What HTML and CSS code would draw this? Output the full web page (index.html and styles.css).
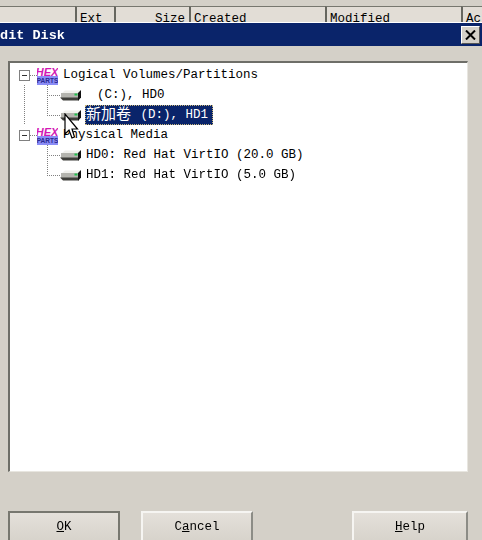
FILE: index.html
```html
<!DOCTYPE html>
<html lang="en">
<head>
    <meta charset="UTF-8">
    <meta name="viewport" content="width=device-width, initial-scale=1.0">
    <title>Edit Disk</title>
    <link rel="stylesheet" href="styles.css">
</head>
<body>

    <svg class="defs" width="0" height="0">
        <symbol id="hex" viewBox="0 0 21 20">
            <rect x="0" y="11" width="21" height="9" fill="#8a8cf6"/>
            <text x="10.5" y="18" text-anchor="middle" class="parts-text">PARTS</text>
            <text x="10" y="10.5" text-anchor="middle" class="hex-text">HEX</text>
        </symbol>
        <symbol id="drive" viewBox="0 0 21 11">
            <path d="M5 0.5H21L18.5 3H2Z" fill="#f0f0ec"/>
            <path d="M1 3H19V8H1Z" fill="#b4b4ae"/>
            <path d="M0 7.5H18.5V10.5H3Z" fill="#3e3e3a"/>
            <path d="M18 3L21 0V7.5L18 11Z" fill="#111"/>
            <rect x="14.5" y="3.5" width="3" height="2" fill="#1fc04c"/>
        </symbol>
    </svg>

    <!-- list view behind the dialog -->
    <div class="list-header">
        <div class="col col-name"></div>
        <div class="col col-ext">Ext</div>
        <div class="col col-size">Size</div>
        <div class="col col-created">Created</div>
        <div class="col col-modified">Modified</div>
        <div class="col col-rest">Ac</div>
    </div>

    <div class="dialog">
        <div class="title-bar">
            <span class="title-text">Edit Disk</span>
            <button class="close-btn" type="button">
                <svg width="11" height="10" viewBox="0 0 11 10"><path d="M1 0.5L10 9.5M10 0.5L1 9.5" stroke="#000" stroke-width="2"/></svg>
            </button>
        </div>

        <div class="tree">
            <div class="row">
                <span class="expander"></span>
                <span class="dash"></span>
                <svg class="icon-hex"><use href="#hex"/></svg>
                <span class="label">Logical Volumes/Partitions</span>
            </div>
            <div class="row">
                <span class="guide"></span>
                <span class="elbow"></span>
                <svg class="icon-drive"><use href="#drive"/></svg>
                <span class="label label-blank">(C:), HD0</span>
            </div>
            <div class="row">
                <span class="guide"></span>
                <span class="elbow elbow-last"></span>
                <svg class="icon-drive"><use href="#drive"/></svg>
                <span class="label selected"><span class="cjk">新加卷</span> (D:), HD1</span>
            </div>
            <div class="row">
                <span class="expander"></span>
                <span class="dash"></span>
                <svg class="icon-hex"><use href="#hex"/></svg>
                <span class="label">Physical Media</span>
            </div>
            <div class="row">
                <span class="guide guide-none"></span>
                <span class="elbow"></span>
                <svg class="icon-drive"><use href="#drive"/></svg>
                <span class="label">HD0: Red Hat VirtIO (20.0 GB)</span>
            </div>
            <div class="row">
                <span class="guide guide-none"></span>
                <span class="elbow elbow-last"></span>
                <svg class="icon-drive"><use href="#drive"/></svg>
                <span class="label">HD1: Red Hat VirtIO (5.0 GB)</span>
            </div>
        </div>

        <div class="buttons">
            <button class="btn btn-default" type="button"><u>O</u>K</button>
            <button class="btn btn-cancel" type="button">C<u>a</u>ncel</button>
            <button class="btn btn-help" type="button"><u>H</u>elp</button>
        </div>
    </div>

    <!-- mouse pointer -->
    <svg class="pointer" width="18" height="29" viewBox="0 0 18 29">
        <path d="M1 1V21L5 17L8 25L10.5 24L8 16H13.5Z" fill="#fff" stroke="#000" stroke-width="1.2"/>
    </svg>

</body>
</html>
```

FILE: styles.css
```css
body {
    margin: 0;
    width: 482px;
    height: 540px;
    overflow: hidden;
    background-color: #d4d0c8;
    font-family: "Liberation Mono", "Noto Sans CJK SC", monospace;
    font-size: 12.5px;
    color: #000;
    position: relative;
    filter: blur(0.35px); /* the reference is a soft, rescaled capture */
}
.defs {
    position: absolute;
}
.hex-text {
    font-family: "Liberation Sans", sans-serif;
    font-size: 11px;
    font-weight: bold;
    font-style: italic;
    fill: #d218b4;
}
.parts-text {
    font-family: "Liberation Sans", sans-serif;
    font-size: 6.5px;
    font-weight: bold;
    fill: #2a2a90;
}

/* list header behind the dialog */
.list-header {
    display: flex;
    height: 16px;
    padding-top: 6px;
    overflow: hidden;
}
.col {
    box-sizing: border-box;
    height: 24px;
    padding: 5px 0 0 3px;
    border-top: 1px solid #77776f;
    border-left: 2px solid #66665f;
    background-color: #e2ddd6;
}
.col-name { width: 75px; border-left: none; }
.col-ext { width: 39px; }
.col-size { width: 75px; text-align: right; padding-right: 4px; }
.col-created { width: 136px; }
.col-modified { width: 136px; }
.col-rest { width: 21px; }

.dialog {
    border-top: 1px solid #fff;
}
.title-bar {
    display: flex;
    align-items: center;
    justify-content: space-between;
    height: 23px;
    padding-right: 2px;
    background-color: #0a246a;
}
.title-text {
    margin-left: -8px;
    padding-top: 2px;
    font-size: 13.5px;
    font-weight: bold;
    color: #fff;
}
.close-btn {
    display: flex;
    align-items: center;
    justify-content: center;
    box-sizing: border-box;
    width: 19px;
    height: 18px;
    padding: 0;
    border: 1px solid;
    border-color: #fff #555 #555 #fff;
    background-color: #d4d0c8;
}

.tree {
    box-sizing: border-box;
    width: 460px;
    height: 411px;
    margin: 15px 0 0 8px;
    padding-top: 2px;
    background-color: #fff;
    border: 2px solid;
    border-color: #6e6e68 #e8e6e0 #e8e6e0 #6e6e68;
    border-right-width: 1px;
    border-bottom-width: 1px;
}
.row {
    display: flex;
    align-items: center;
    height: 20px;
    padding-left: 9px;
}
.expander {
    box-sizing: border-box;
    width: 11px;
    height: 11px;
    border: 1px solid #808080;
    background: linear-gradient(#333, #333) center / 5px 1px no-repeat #fff;
}
.dash {
    width: 7px;
    height: 1px;
    background: repeating-linear-gradient(to right, #808080 0 1px, transparent 1px 2px);
}
.icon-hex {
    width: 21px;
    height: 20px;
}
.guide {
    width: 23px;
    height: 20px;
    margin-left: 5px;
    margin-right: -5px;
    background: repeating-linear-gradient(to bottom, #808080 0 1px, transparent 1px 2px) left top / 1px 100% no-repeat;
}
.guide-none {
    background: none;
}
.elbow {
    width: 13px;
    height: 20px;
    margin-left: 5px;
    background:
        repeating-linear-gradient(to bottom, #808080 0 1px, transparent 1px 2px) left top / 1px 100% no-repeat,
        repeating-linear-gradient(to right, #808080 0 1px, transparent 1px 2px) left center / 100% 1px no-repeat;
}
.elbow-last {
    background:
        repeating-linear-gradient(to bottom, #808080 0 1px, transparent 1px 2px) left top / 1px 50% no-repeat,
        repeating-linear-gradient(to right, #808080 0 1px, transparent 1px 2px) left center / 100% 1px no-repeat;
}
.icon-drive {
    width: 21px;
    height: 11px;
}
.label {
    margin-left: 5px;
    white-space: pre;
}
.icon-drive + .label {
    margin-left: 5px;
}
.icon-drive + .label-blank {
    margin-left: 16px;
}
.icon-drive + .selected {
    box-sizing: border-box;
    display: flex;
    align-items: center;
    gap: 2px;
    width: 128px;
    height: 20px;
    margin-left: 4px;
    padding-left: 1px;
    background-color: #0a246a;
    color: #fff;
    outline: 1px dotted #c9b67a;
    outline-offset: -1px;
}
.cjk {
    font-size: 15px;
    line-height: 18px;
    margin-top: 1px;
}

.buttons {
    display: flex;
    margin: 39px 14px 0 8px;
}
.btn {
    box-sizing: border-box;
    width: 112px;
    height: 34px;
    padding: 0 0 2px;
    font-family: inherit;
    font-size: 12.5px;
    color: #000;
    background: linear-gradient(#e4e0da, #d6d2ca);
    border: 2px solid;
    border-color: #f6f5f2 #8c8c86 #8c8c86 #f6f5f2;
}
.btn-default {
    border-color: #77776f;
}
.btn-cancel {
    margin-left: 21px;
}
.btn-help {
    width: 116px;
    margin-left: auto;
}

.pointer {
    position: absolute;
    left: 64px;
    top: 113px;
}
```
